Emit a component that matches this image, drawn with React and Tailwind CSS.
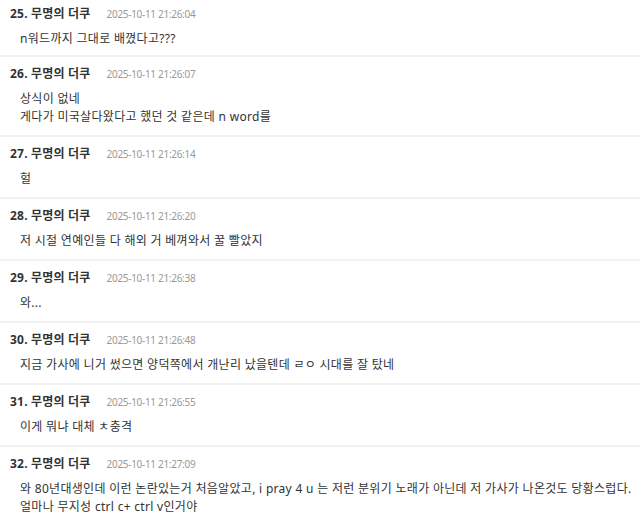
import React from 'react';

const COMMENTS = [
  { no: 25, time: '2025-10-11 21:26:04', lines: ['n워드까지 그대로 배꼈다고???'] },
  { no: 26, time: '2025-10-11 21:26:07', lines: ['상식이 없네', '게다가 미국살다왔다고 했던 것 같은데 n word를'] },
  { no: 27, time: '2025-10-11 21:26:14', lines: ['헐'] },
  { no: 28, time: '2025-10-11 21:26:20', lines: ['저 시절 연예인들 다 해외 거 베껴와서 꿀 빨았지'] },
  { no: 29, time: '2025-10-11 21:26:38', lines: ['와...'] },
  { no: 30, time: '2025-10-11 21:26:48', lines: ['지금 가사에 니거 썼으면 양덕쪽에서 개난리 났을텐데 ㄹㅇ 시대를 잘 탔네'] },
  { no: 31, time: '2025-10-11 21:26:55', lines: ['이게 뭐냐 대체 ㅊ충격'] },
  {
    no: 32,
    time: '2025-10-11 21:27:09',
    lines: [
      '와 80년대생인데 이런 논란있는거 처음알았고, i pray 4 u 는 저런 분위기 노래가 아닌데 저 가사가 나온것도 당황스럽다.',
      '얼마나 무지성 ctrl c+ ctrl v인거야',
    ],
  },
];

const CommentItem = ({ comment, first }) => (
  <li className={`${first ? 'pt-[5px] pb-[7px]' : 'pt-[8px] pb-[9px]'} pl-[10px] border-b-2 border-[#f2f2f2]`}>
    <div className="flex items-center h-[18px] leading-[18px]">
      <span className="text-[12px] font-bold tracking-[0.2px] text-[#333]">{comment.no}. 무명의 더쿠</span>
      <span className="ml-[16px] text-[10px] tracking-[-0.3px] text-[#999]">{comment.time}</span>
    </div>
    <div className="mt-[7px] pl-[10px] text-[12px] leading-[18px] tracking-[0.3px] text-[#333] whitespace-nowrap">
      {comment.lines.map((line, i) => (
        <p key={i}>{line}</p>
      ))}
    </div>
  </li>
);

export default function App() {
  return (
    <div
      className="w-[640px] h-[522px] overflow-hidden bg-white"
      style={{ fontFamily: '"Noto Sans", "Noto Sans CJK KR", sans-serif' }}
    >
      <ul>
        {COMMENTS.map((c, i) => (
          <CommentItem key={c.no} comment={c} first={i === 0} />
        ))}
      </ul>
    </div>
  );
}
